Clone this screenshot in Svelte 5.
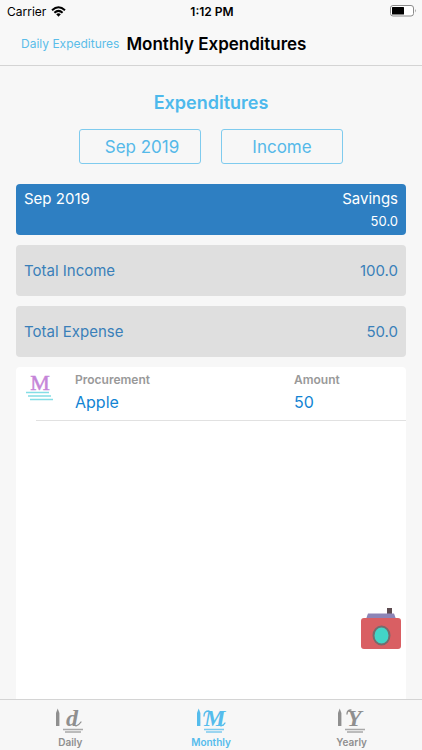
<script>
  const totals = [
    { label: 'Total Income', value: '100.0' },
    { label: 'Total Expense', value: '50.0' }
  ];
  const entries = [{ name: 'Apple', amount: '50' }];
  const tabs = [
    { label: 'Daily', letter: 'd' },
    { label: 'Monthly', letter: 'm' },
    { label: 'Yearly', letter: 'y' }
  ];
  let active = $state('Monthly');
</script>

<div class="screen">
  <header>
    <div class="status">
      <span class="carrier">
        Carrier
        <svg width="15" height="11" viewBox="0 0 15 11" aria-hidden="true">
          <g fill="none" stroke="#000" stroke-width="2">
            <path d="M1 4.2Q7.5 -1.6 14 4.2" />
            <path d="M3.4 6.7Q7.5 3 11.6 6.7" />
          </g>
          <path d="M5.2 8.3Q7.5 6.4 9.8 8.3L7.5 10.8Z" />
        </svg>
      </span>
      <span class="time">1:12 PM</span>
      <svg class="battery" width="27" height="12" viewBox="0 0 27 12" aria-hidden="true">
        <rect x="0.5" y="0.5" width="23" height="10.5" rx="2.5" fill="#fff" stroke="#8b8b8b" />
        <rect x="2" y="2" width="12" height="7.5" rx="0.5" />
        <path d="M25 4Q26.6 5.7 25 7.5Z" fill="#8b8b8b" />
      </svg>
    </div>
    <nav class="bar">
      <a href="#daily">Daily Expeditures</a>
      <h1>Monthly Expenditures</h1>
    </nav>
  </header>

  <main>
    <h2>Expenditures</h2>
    <div class="filters">
      <button class="month">Sep 2019</button>
      <button>Income</button>
    </div>

    <section class="card savings">
      <span>Sep 2019</span>
      <div class="saved">
        <span>Savings</span>
        <span class="small">50.0</span>
      </div>
    </section>
    {#each totals as total}
      <section class="card total">
        <span>{total.label}</span>
        <span>{total.value}</span>
      </section>
    {/each}

    <section class="list">
      {#each entries as entry}
        <article>
          <svg class="logo" width="28" height="30" viewBox="0 0 28 30" aria-hidden="true">
            <text x="14" y="17" text-anchor="middle">M</text>
            <g stroke="#84dde5" stroke-width="1.6">
              <path d="M0 19.5H23M2 23H25M4 26.5H27" />
            </g>
          </svg>
          <dl class="what">
            <dt>Procurement</dt>
            <dd>{entry.name}</dd>
          </dl>
          <dl>
            <dt>Amount</dt>
            <dd>{entry.amount}</dd>
          </dl>
        </article>
      {/each}
      <button class="camera" aria-label="Scan receipt">
        <svg width="42" height="42" viewBox="0 0 42 42">
          <rect x="27" y="0" width="5" height="7" fill="#5d4b50" />
          <path d="M8 5.5H34L36 11H6Z" fill="#8d84b6" />
          <rect x="1" y="10" width="40" height="31" rx="3" fill="#d95f63" />
          <ellipse cx="21.5" cy="27.5" rx="8" ry="9" fill="#42d5c7" stroke="#756b6d" stroke-width="2" />
        </svg>
      </button>
    </section>
  </main>

  <footer>
    {#each tabs as tab}
      <button class="tab" class:active={active === tab.label} onclick={() => (active = tab.label)}>
        <svg width="30" height="28" viewBox="0 0 30 28" aria-hidden="true">
          <path d="M1 6L2.7 1.5L4.4 6V19H1Z" fill="currentColor" />
          {#if tab.letter === 'd'}
            <text x="11" y="19" class="script">d</text>
            <path class="swash" d="M21 19Q24 18 26 15" />
          {:else if tab.letter === 'm'}
            <text x="8" y="19" class="script">M</text>
            <path class="swash" d="M8 9Q8 4 13 4M25 19Q28 18 29 16" />
          {:else}
            <text x="10" y="19" class="script">Y</text>
            <path class="swash" d="M10 7Q10 3 14 3" />
          {/if}
          <path d="M8 22.5H28M10 25H26" stroke="currentColor" stroke-width="1.3" opacity=".75" />
        </svg>
        <span>{tab.label}</span>
      </button>
    {/each}
  </footer>
</div>

<style>
  :global(body) {
    margin: 0;
  }
  .screen {
    display: flex;
    flex-direction: column;
    min-height: 100vh;
    background: #f7f7f7;
    font-family: Inter, "Liberation Sans", sans-serif;
    color: #000;
  }
  button {
    font: inherit;
    color: inherit;
    background: none;
    border: 0;
    padding: 0;
    cursor: pointer;
  }
  header {
    border-bottom: 1px solid #d4d4d4;
    background: #f8f8f8;
  }
  .status {
    display: grid;
    grid-template-columns: 1fr auto 1fr;
    align-items: center;
    height: 22px;
    padding: 0 5px 0 7px;
    font-size: 12px;
  }
  .carrier {
    display: flex;
    align-items: center;
    gap: 5px;
  }
  .time {
    font-weight: 600;
  }
  .battery {
    justify-self: end;
  }
  .bar {
    display: flex;
    align-items: center;
    gap: 7px;
    height: 43px;
    padding-left: 21px;
    white-space: nowrap;
  }
  .bar a {
    color: #5bbde9;
    font-size: 12px;
    text-decoration: none;
  }
  h1 {
    margin: 0;
    font-size: 17px;
    font-weight: 600;
  }
  main {
    flex: 1;
    display: flex;
    flex-direction: column;
    gap: 10px;
    padding: 26px 16px 0;
  }
  h2 {
    margin: 0;
    font-size: 18px;
    line-height: 22px;
    font-weight: 600;
    text-align: center;
    color: #4db9ec;
  }
  .filters {
    display: flex;
    justify-content: center;
    gap: 20px;
    padding: 5px 0 10px;
  }
  .filters button {
    width: 122px;
    height: 35px;
    border: 1px solid #7fcbee;
    border-radius: 3px;
    font-size: 17px;
    color: #55b9e9;
  }
  .filters .month {
    padding-left: 4px;
  }
  .card {
    box-sizing: border-box;
    display: flex;
    justify-content: space-between;
    height: 51px;
    padding: 0 8px;
    border-radius: 4px;
    font-size: 15px;
  }
  .savings {
    background: #2e7fc2;
    color: #fff;
    padding-top: 4px;
    line-height: 22px;
  }
  .saved {
    display: flex;
    flex-direction: column;
    align-items: flex-end;
  }
  .small {
    font-size: 13px;
  }
  .total {
    align-items: center;
    background: #dfdfdf;
    color: #3a7fb9;
  }
  .list {
    flex: 1;
    position: relative;
    background: #fff;
    border-radius: 4px 4px 0 0;
  }
  article {
    display: flex;
    height: 53px;
    margin-left: 20px;
    border-bottom: 1px solid #e1e1e1;
  }
  .logo {
    flex: none;
    overflow: visible;
    margin: 6px 21px 0 -10px;
  }
  .logo text {
    font: 22px "Liberation Serif", serif;
    fill: #c585d8;
    stroke: #c585d8;
    stroke-width: 0.5;
  }
  dl {
    margin: 4px 0 0;
    width: 112px;
  }
  .what {
    flex: 1;
  }
  dt {
    font-size: 12px;
    line-height: 18px;
    font-weight: 600;
    color: #999;
  }
  dd {
    margin: 0;
    font-size: 16px;
    line-height: 26px;
    color: #1284d3;
  }
  .camera {
    position: absolute;
    right: 4px;
    bottom: 49px;
  }
  .camera svg {
    display: block;
  }
  footer {
    display: flex;
    height: 50px;
    border-top: 1px solid #d4d4d4;
    background: #f7f7f7;
  }
  .tab {
    flex: 1;
    display: flex;
    flex-direction: column;
    align-items: center;
    padding-top: 7px;
    color: #8f8f8f;
    font-size: 10px;
    line-height: 14px;
    font-weight: 600;
  }
  .tab svg {
    overflow: visible;
  }
  .active {
    color: #55bcec;
  }
  .script {
    font: italic bold 24px "Liberation Serif", serif;
    fill: currentColor;
  }
  .swash {
    fill: none;
    stroke: currentColor;
    stroke-width: 1.3;
    stroke-linecap: round;
  }
</style>
